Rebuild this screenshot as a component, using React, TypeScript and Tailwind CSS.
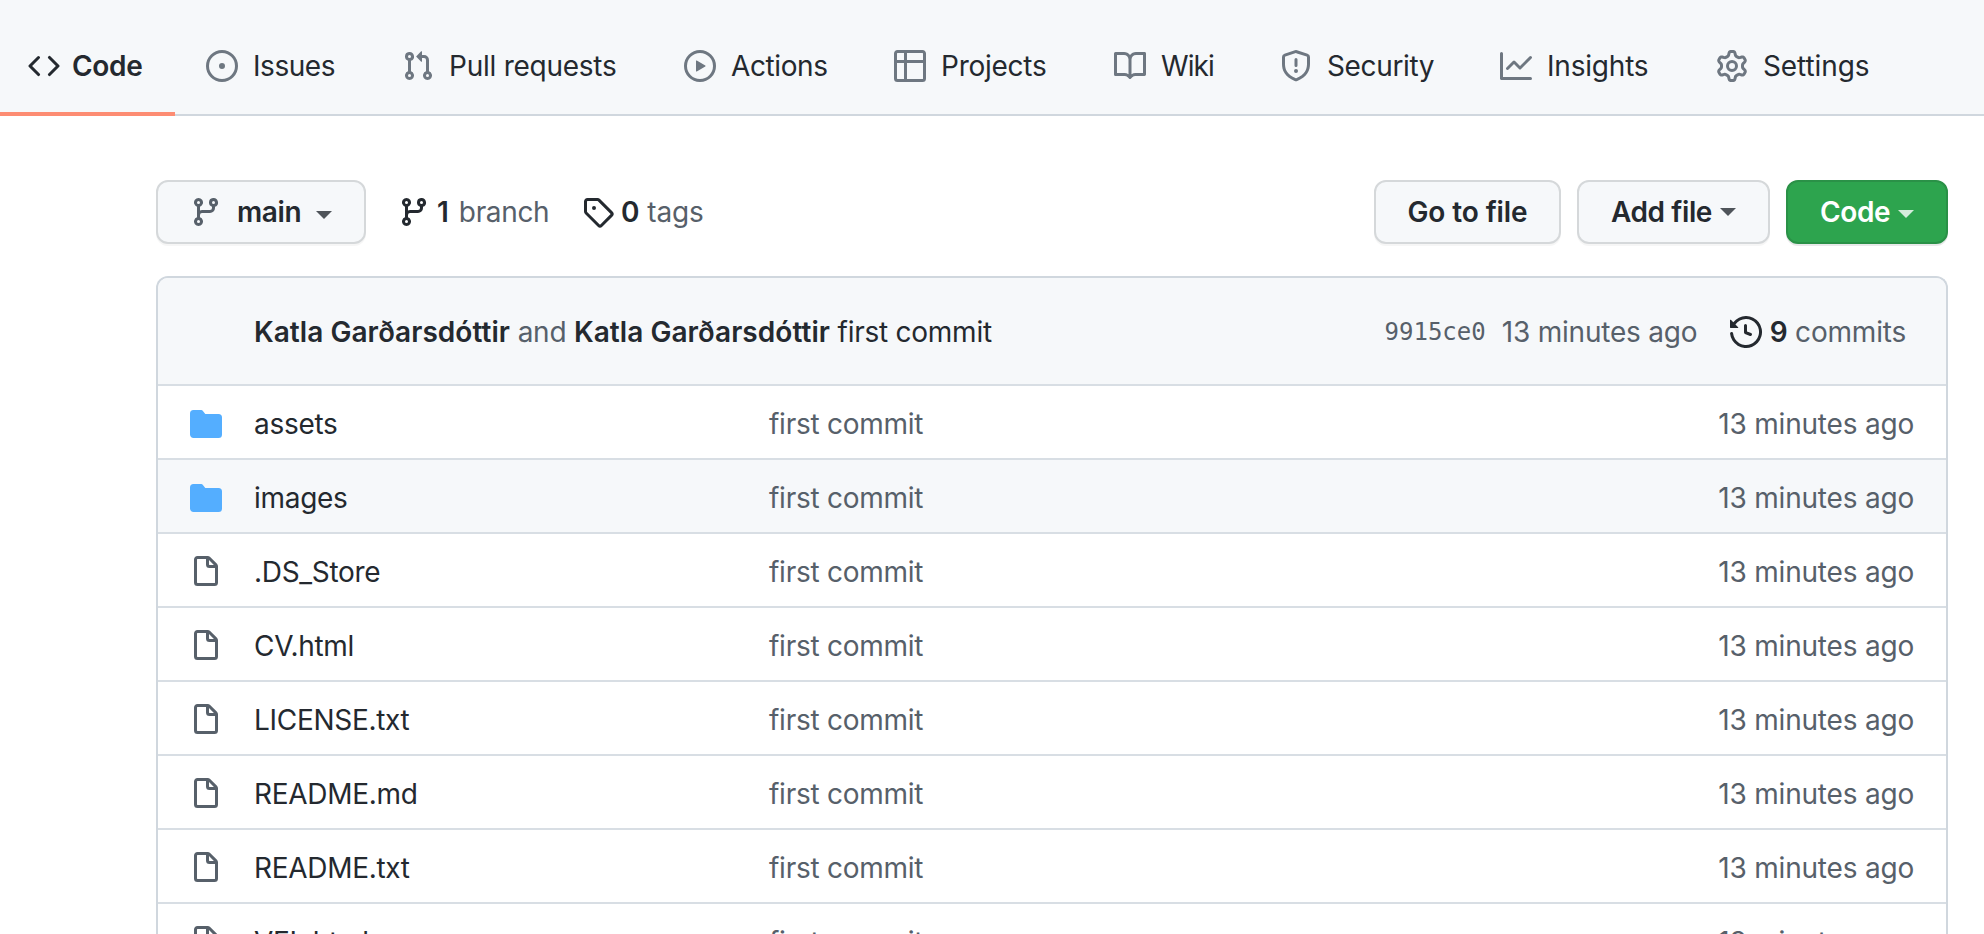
import React from "react";

const icons = {
  code: "M4.72 3.22a.75.75 0 011.06 1.06L2.06 8l3.72 3.72a.75.75 0 11-1.06 1.06L.47 8.53a.75.75 0 010-1.06l4.25-4.25zm6.56 0a.75.75 0 10-1.06 1.06L13.94 8l-3.72 3.72a.75.75 0 101.06 1.06l4.25-4.25a.75.75 0 000-1.06l-4.25-4.25z",
  issue: "M8 9.5a1.5 1.5 0 100-3 1.5 1.5 0 000 3zM8 0a8 8 0 100 16A8 8 0 008 0zM1.5 8a6.5 6.5 0 1113 0 6.5 6.5 0 01-13 0z",
  pull: "M7.177 3.073L9.573.677A.25.25 0 0110 .854v4.792a.25.25 0 01-.427.177L7.177 3.427a.25.25 0 010-.354zM3.75 2.5a.75.75 0 100 1.5.75.75 0 000-1.5zm-2.25.75a2.25 2.25 0 113 2.122v5.256a2.251 2.251 0 11-1.5 0V5.372A2.25 2.25 0 011.5 3.25zM11 2.5h-1V4h1a1 1 0 011 1v5.628a2.251 2.251 0 101.5 0V5A2.5 2.5 0 0011 2.5zm1 10.25a.75.75 0 111.5 0 .75.75 0 01-1.5 0zM3.75 12a.75.75 0 100 1.5.75.75 0 000-1.5z",
  play: "M1.5 8a6.5 6.5 0 1113 0 6.5 6.5 0 01-13 0zM8 0a8 8 0 100 16A8 8 0 008 0zM6.379 5.227A.25.25 0 006 5.442v5.117a.25.25 0 00.379.214l4.264-2.559a.25.25 0 000-.428L6.379 5.227z",
  table: "M0 1.75C0 .784.784 0 1.75 0h12.5C15.216 0 16 .784 16 1.75v12.5A1.75 1.75 0 0114.25 16H1.75A1.75 1.75 0 010 14.25V1.75zM1.5 6.5v7.75c0 .138.112.25.25.25H5v-8H1.5zM5 5H1.5V1.75a.25.25 0 01.25-.25H5V5zm1.5 1.5v8h7.75a.25.25 0 00.25-.25V6.5h-8zm8-1.5h-8V1.5h7.75a.25.25 0 01.25.25V5z",
  book: "M0 1.75A.75.75 0 01.75 1h4.253c1.227 0 2.317.59 3 1.501A3.744 3.744 0 0111.006 1h4.245a.75.75 0 01.75.75v10.5a.75.75 0 01-.75.75h-4.507a2.25 2.25 0 00-1.591.659l-.622.621a.75.75 0 01-1.06 0l-.622-.621A2.25 2.25 0 005.258 13H.75a.75.75 0 01-.75-.75V1.75zm8.755 3a2.25 2.25 0 012.25-2.25H14.5v9h-3.757c-.71 0-1.4.201-1.992.572l.004-7.322zm-1.504 7.324l.004-5.073-.002-2.253A2.25 2.25 0 005.003 2.5H1.5v9h3.757a3.75 3.75 0 011.994.574z",
  shield: "M7.467.133a1.75 1.75 0 011.066 0l5.25 1.68A1.75 1.75 0 0115 3.48V7c0 1.566-.32 3.182-1.303 4.682-.983 1.498-2.585 2.813-5.032 3.855a1.7 1.7 0 01-1.33 0c-2.447-1.042-4.049-2.357-5.032-3.855C1.32 10.182 1 8.566 1 7V3.48a1.75 1.75 0 011.217-1.667l5.25-1.68zm.61 1.429a.25.25 0 00-.153 0l-5.25 1.68a.25.25 0 00-.174.238V7c0 1.358.275 2.666 1.057 3.86.784 1.194 2.121 2.34 4.366 3.297a.2.2 0 00.154 0c2.245-.956 3.582-2.104 4.366-3.298C13.225 9.666 13.5 8.36 13.5 7V3.48a.25.25 0 00-.174-.237l-5.25-1.68zM9 10.5a1 1 0 11-2 0 1 1 0 012 0zm-.25-5.75a.75.75 0 10-1.5 0v3a.75.75 0 001.5 0v-3z",
  graph: "M1.5 1.75a.75.75 0 00-1.5 0v12.5c0 .414.336.75.75.75h14.5a.75.75 0 000-1.5H1.5V1.75zm14.28 2.53a.75.75 0 00-1.06-1.06L10 7.94 7.53 5.47a.75.75 0 00-1.06 0L3.22 8.72a.75.75 0 001.06 1.06L7 7.06l2.47 2.47a.75.75 0 001.06 0l5.25-5.25z",
  gear: "M7.429 1.525a6.593 6.593 0 011.142 0c.036.003.108.036.137.146l.289 1.105c.147.56.55.967.997 1.189.174.086.341.183.501.29.417.278.97.423 1.53.27l1.102-.303c.11-.03.175.016.195.046.219.31.41.641.573.989.014.031.022.11-.059.19l-.815.806c-.411.406-.562.957-.53 1.456a4.588 4.588 0 010 .582c-.032.499.119 1.05.53 1.456l.815.806c.08.08.073.159.059.19a6.494 6.494 0 01-.573.99c-.02.029-.086.074-.195.045l-1.103-.303c-.559-.153-1.112-.008-1.529.27-.16.107-.327.204-.5.29-.449.222-.851.628-.998 1.189l-.289 1.105c-.029.11-.101.143-.137.146a6.613 6.613 0 01-1.142 0c-.036-.003-.108-.037-.137-.146l-.289-1.105c-.147-.56-.55-.967-.997-1.189a4.502 4.502 0 01-.501-.29c-.417-.278-.97-.423-1.53-.27l-1.102.303c-.11.03-.175-.016-.195-.046a6.492 6.492 0 01-.573-.989c-.014-.031-.022-.11.059-.19l.815-.806c.411-.406.562-.957.53-1.456a4.587 4.587 0 010-.582c.032-.499-.119-1.05-.53-1.456l-.815-.806c-.08-.08-.073-.159-.059-.19a6.44 6.44 0 01.573-.99c.02-.029.086-.075.195-.045l1.103.303c.559.153 1.112.008 1.529-.27.16-.107.327-.204.5-.29.449-.222.851-.628.998-1.189l.289-1.105c.029-.11.101-.143.137-.146zM8 0c-.236 0-.47.01-.701.03-.743.065-1.29.615-1.458 1.261l-.29 1.106c-.017.066-.078.158-.211.224a5.994 5.994 0 00-.668.386c-.123.082-.233.09-.3.071L3.27 2.776c-.644-.177-1.392.02-1.82.63a7.977 7.977 0 00-.704 1.217c-.315.675-.111 1.422.363 1.891l.815.806c.05.048.098.147.088.294a6.084 6.084 0 000 .772c.01.147-.038.246-.088.294l-.815.806c-.474.469-.678 1.216-.363 1.891.2.428.436.835.704 1.218.428.609 1.176.806 1.82.63l1.103-.303c.066-.019.176-.011.299.071.213.143.436.272.668.386.133.066.194.158.212.224l.289 1.106c.169.646.715 1.196 1.458 1.26a8.094 8.094 0 001.402 0c.743-.064 1.29-.614 1.458-1.26l.29-1.106c.017-.066.078-.158.211-.224a5.98 5.98 0 00.668-.386c.123-.082.233-.09.3-.071l1.102.302c.644.177 1.392-.02 1.82-.63.268-.382.505-.789.704-1.217.315-.675.111-1.422-.364-1.891l-.814-.806c-.05-.048-.098-.147-.088-.294a6.1 6.1 0 000-.772c-.01-.147.039-.246.088-.294l.814-.806c.475-.469.679-1.216.364-1.891a7.992 7.992 0 00-.704-1.218c-.428-.609-1.176-.806-1.82-.63l-1.103.303c-.066.019-.176.011-.299-.071a5.991 5.991 0 00-.668-.386c-.133-.066-.194-.158-.212-.224L10.16 1.29C9.99.645 9.444.095 8.701.031A8.094 8.094 0 008 0zm1.5 8a1.5 1.5 0 11-3 0 1.5 1.5 0 013 0zM11 8a3 3 0 11-6 0 3 3 0 016 0z",
  branch: "M11.75 2.5a.75.75 0 100 1.5.75.75 0 000-1.5zm-2.25.75a2.25 2.25 0 113 2.122V6A2.5 2.5 0 0110 8.5H6a1 1 0 00-1 1v1.128a2.251 2.251 0 11-1.5 0V5.372a2.25 2.25 0 111.5 0v1.836A2.492 2.492 0 016 7h4a1 1 0 001-1v-.628A2.25 2.25 0 019.5 3.25zM4.25 12a.75.75 0 100 1.5.75.75 0 000-1.5zM3.5 3.25a.75.75 0 111.5 0 .75.75 0 01-1.5 0z",
  tag: "M2.5 7.775V2.75a.25.25 0 01.25-.25h5.025a.25.25 0 01.177.073l6.25 6.25a.25.25 0 010 .354l-5.025 5.025a.25.25 0 01-.354 0l-6.25-6.25a.25.25 0 01-.073-.177zm-1.5 0V2.75C1 1.784 1.784 1 2.75 1h5.025c.464 0 .91.184 1.238.513l6.25 6.25a1.75 1.75 0 010 2.474l-5.026 5.026a1.75 1.75 0 01-2.474 0l-6.25-6.25A1.75 1.75 0 011 7.775zM6 5a1 1 0 100 2 1 1 0 000-2z",
  history: "M1.643 3.143L.427 1.927A.25.25 0 000 2.104V5.75c0 .138.112.25.25.25h3.646a.25.25 0 00.177-.427L2.715 4.215a6.5 6.5 0 11-1.18 4.458.75.75 0 10-1.493.154 8.001 8.001 0 101.6-5.684zM7.75 4a.75.75 0 01.75.75v2.992l2.028.812a.75.75 0 01-.557 1.392l-2.5-1A.75.75 0 017 8.25v-3.5A.75.75 0 017.75 4z",
  folder: "M1.75 1A1.75 1.75 0 000 2.75v10.5C0 14.216.784 15 1.75 15h12.5A1.75 1.75 0 0016 13.25v-8.5A1.75 1.75 0 0014.25 3h-6.5a.25.25 0 01-.2-.1l-.9-1.2c-.33-.44-.85-.7-1.4-.7h-3.5z",
  file: "M3.75 1.5a.25.25 0 00-.25.25v11.5c0 .138.112.25.25.25h8.5a.25.25 0 00.25-.25V6H9.75A1.75 1.75 0 018 4.25V1.5H3.75zm5.75.56v2.19c0 .138.112.25.25.25h2.19L9.5 2.06zM2 1.75C2 .784 2.784 0 3.75 0h5.086c.464 0 .909.184 1.237.513l3.414 3.414c.329.328.513.773.513 1.237v8.086A1.75 1.75 0 0112.25 15h-8.5A1.75 1.75 0 012 13.25V1.75z",
};

function Icon({ name, className }: { name: keyof typeof icons; className: string }) {
  return (
    <svg viewBox="0 0 16 16" fill="currentColor" fillRule="evenodd" className={"size-8 shrink-0 " + className}>
      <path d={icons[name]} />
    </svg>
  );
}

function Caret({ className }: { className: string }) {
  return (
    <svg viewBox="0 0 16 8" fill="currentColor" className={"h-2 w-4 shrink-0 " + className}>
      <path d="M0 0h16L8 8z" />
    </svg>
  );
}

const tabs: { icon: keyof typeof icons; label: string; width: string; text: string }[] = [
  { icon: "issue", label: "Issues", width: "w-[196px]", text: "tracking-[-0.45px]" },
  { icon: "pull", label: "Pull requests", width: "w-[282px]", text: "tracking-[-0.25px]" },
  { icon: "play", label: "Actions", width: "w-[210px]", text: "tracking-[-0.4px]" },
  { icon: "table", label: "Projects", width: "w-[220px]", text: "tracking-[-0.25px]" },
  { icon: "book", label: "Wiki", width: "w-[166px]", text: "tracking-[-0.9px]" },
  { icon: "shield", label: "Security", width: "w-[220px]", text: "tracking-[-0.35px]" },
  { icon: "graph", label: "Insights", width: "w-[216px]", text: "tracking-[-0.2px]" },
  { icon: "gear", label: "Settings", width: "w-[200px]", text: "tracking-[-0.1px]" },
];

const files: { name: string; folder?: boolean; active?: boolean }[] = [
  { name: "assets", folder: true },
  { name: "images", folder: true, active: true },
  { name: ".DS_Store" },
  { name: "CV.html" },
  { name: "LICENSE.txt" },
  { name: "README.md" },
  { name: "README.txt" },
  { name: "VEL.html" },
];

const button =
  "flex h-16 items-center rounded-xl border-2 border-[#d5d8da] bg-[#f6f8fa] font-semibold shadow-[0_2px_0_rgba(27,31,36,0.04)]";

export default function App() {
  return (
    <div className="flex h-[934px] w-[1984px] flex-col overflow-hidden bg-white font-['Inter',sans-serif] text-[28px] leading-[42px] whitespace-nowrap text-[#24292f]">
      <nav className="flex h-[116px] shrink-0 border-b-2 border-[#d0d7de] bg-[#f6f8fa]">
        <a className="-mb-0.5 mr-[31px] flex w-[175px] items-center border-b-4 border-[#fd8c73] pt-5 pl-7 font-semibold">
          <Icon name="code" className="mr-3" />
          <span className="tracking-[-0.3px]">Code</span>
        </a>
        {tabs.map((t) => (
          <a key={t.label} className={"flex shrink-0 items-center pt-[18px] " + t.width}>
            <Icon name={t.icon} className="mr-[15px] text-[#6e7781]" />
            <span className={t.text}>{t.label}</span>
          </a>
        ))}
      </nav>

      <div className="mt-16 mr-9 ml-[156px] flex h-16 shrink-0 items-center">
        <button className={button + " w-[210px] pl-8"}>
          <Icon name="branch" className="mr-[15px] text-[#57606a]" />
          <span className="w-[79px] text-left tracking-[-0.4px]">main</span>
          <Caret className="mt-1.5 text-[#4f545a]" />
        </button>
        <a className="ml-8 flex w-[184px] items-center">
          <Icon name="branch" className="mr-[7px]" />
          <strong className="mr-2.5 font-semibold">1</strong>
          <span className="tracking-[-0.35px] text-[#57606a]">branch</span>
        </a>
        <a className="flex items-center">
          <Icon name="tag" className="mr-[7px]" />
          <span>
            <strong className="font-semibold">0</strong> <span className="tracking-[-0.2px] text-[#57606a]">tags</span>
          </span>
        </a>
        <div className="ml-auto flex gap-4">
          <button className={button + " w-[187px] justify-center tracking-[-0.1px]"}>Go to file</button>
          <button className={button + " w-[193px] pl-8"}>
            <span className="w-[109px] text-left tracking-[-0.4px]">Add file</span>
            <Caret className="text-[#4f545a]" />
          </button>
          <button className="flex h-16 w-[162px] items-center rounded-xl border-2 border-[#2a9147] bg-[#2da44e] pl-8 font-semibold text-white shadow-[0_2px_0_rgba(27,31,36,0.1)]">
            <span className="w-[78px] text-left tracking-[-0.4px]">Code</span>
            <Caret className="mt-1 text-[#d5eddc]" />
          </button>
        </div>
      </div>

      <section className="mt-8 mr-9 ml-[156px] flex shrink-0 flex-col rounded-t-xl border-2 border-b-0 border-[#d0d7de]">
        <header className="flex h-[108px] items-center rounded-t-[10px] border-b-2 border-[#d8dee4] bg-[#f6f8fa] pt-0.5 pr-10 pl-24">
          <span className="tracking-[-0.25px]">
            <strong className="font-semibold tracking-[0.05px]">Katla Garðarsdóttir</strong>{" "}
            <span className="text-[#57606a]">and</span>{" "}
            <strong className="font-semibold tracking-[0.05px]">Katla Garðarsdóttir</strong> first commit
          </span>
          <code className="mr-4 ml-auto font-['DejaVu_Sans_Mono',monospace] text-[24px] text-[#57606a]">9915ce0</code>
          <span className="w-[228px] tracking-[-0.2px] text-[#57606a]">13 minutes ago</span>
          <Icon name="history" className="mr-2" />
          <span className="tracking-[-0.2px]">
            <strong className="font-semibold">9</strong> <span className="text-[#57606a]">commits</span>
          </span>
        </header>
        {files.map((f) => (
          <div
            key={f.name}
            className={"flex h-[74px] shrink-0 items-center border-b-2 border-[#d8dee4] px-8 pt-1 " + (f.active ? "bg-[#f6f8fa]" : "")}
          >
            <Icon name={f.folder ? "folder" : "file"} className={f.folder ? "mr-8 text-[#54aeff]" : "mr-8 text-[#57606a]"} />
            <span className="w-[515px] tracking-[-0.3px]">{f.name}</span>
            <span className="tracking-[-0.25px] text-[#57606a]">first commit</span>
            <span className="ml-auto tracking-[-0.2px] text-[#57606a]">13 minutes ago</span>
          </div>
        ))}
      </section>
    </div>
  );
}
